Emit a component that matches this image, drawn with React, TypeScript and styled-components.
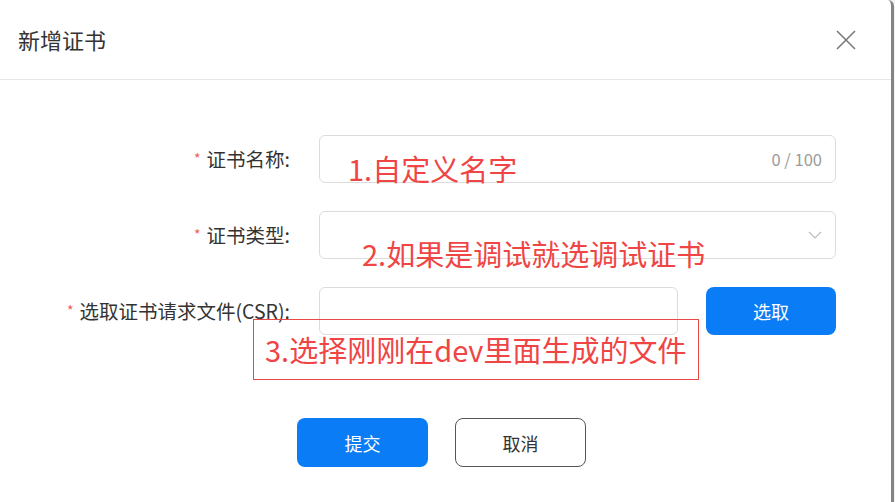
import React from "react";
import styled, { createGlobalStyle } from "styled-components";

const GlobalStyle = createGlobalStyle`
  html, body {
    margin: 0;
    padding: 0;
    background: #f3f3f3;
    font-family: "Noto Sans CJK SC", "Noto Sans", sans-serif;
  }
  * { box-sizing: border-box; }
`;

const Dialog = styled.div`
  position: relative;
  width: 894px;
  height: 502px;
  background: #ffffff;
  border-right: 3px solid #858585;
  border-top-right-radius: 6px;
  overflow: hidden;
`;

const Header = styled.div`
  height: 80px;
  display: flex;
  align-items: center;
  justify-content: space-between;
  padding: 0 34px 0 18px;
  border-bottom: 1px solid #e6e6e6;
`;

const Title = styled.div`
  font-size: 22px;
  color: #333333;
  line-height: 1;
  padding-bottom: 2px;
`;

const CloseButton = styled.button`
  width: 22px;
  height: 22px;
  padding: 0;
  border: none;
  background: none;
  display: flex;
  align-items: center;
  justify-content: center;
  cursor: pointer;
`;

const Form = styled.div`
  padding-top: 55px;
  display: flex;
  flex-direction: column;
  gap: 28px;
`;

const Row = styled.div`
  display: grid;
  grid-template-columns: 290px 517px;
  column-gap: 29px;
  align-items: center;
  height: 48px;
`;

const Label = styled.label`
  text-align: right;
  font-size: 19.5px;
  color: #333333;
  white-space: nowrap;
  line-height: 1;
`;

const Star = styled.span`
  color: #f05a5a;
  font-size: 14px;
  margin-right: 6px;
  vertical-align: 3px;
`;

const Field = styled.div`
  height: 48px;
  border: 1px solid #dcdcdc;
  border-radius: 6px;
  display: flex;
  align-items: center;
  justify-content: flex-end;
  padding-right: 13px;
  background: #fff;
`;

const Counter = styled.span`
  font-size: 16.5px;
  color: #9a9a9a;
  line-height: 1;
`;

const FileRow = styled.div`
  display: flex;
  gap: 28px;
  align-items: center;
`;

const FileField = styled(Field)`
  width: 359px;
`;

const Button = styled.button<{ $primary?: boolean; $w?: number; $h?: number }>`
  width: ${(p) => p.$w ?? 131}px;
  height: ${(p) => p.$h ?? 49}px;
  border-radius: 8px;
  font-family: inherit;
  font-size: 18px;
  line-height: 1;
  cursor: pointer;
  background: ${(p) => (p.$primary ? "#0a7cf6" : "#ffffff")};
  color: ${(p) => (p.$primary ? "#ffffff" : "#333333")};
  border: ${(p) => (p.$primary ? "none" : "1.5px solid #555555")};
`;

const Footer = styled.div`
  margin-top: 83px;
  padding-left: 297px;
  display: flex;
  gap: 27px;
`;

const Note = styled.div<{ $left: number; $top: number }>`
  position: absolute;
  left: ${(p) => p.$left}px;
  top: ${(p) => p.$top}px;
  font-size: 29px;
  line-height: 29px;
  color: #ef4545;
  white-space: nowrap;
`;

const NoteBox = styled(Note)`
  height: 61px;
  width: 446px;
  border: 1px solid #e84848;
  display: flex;
  align-items: center;
  padding-left: 11px;
`;

const Chevron = () => (
  <svg width="14" height="8" viewBox="0 0 14 8" fill="none">
    <path d="M1 1 L7 7 L13 1" stroke="#bdbdbd" strokeWidth="1.2" />
  </svg>
);

const CloseIcon = () => (
  <svg width="22" height="22" viewBox="0 0 22 22" fill="none">
    <path d="M2 2 L20 20 M20 2 L2 20" stroke="#7a7a7a" strokeWidth="1.6" />
  </svg>
);

export default function App() {
  return (
    <>
      <GlobalStyle />
      <Dialog>
        <Header>
          <Title>新增证书</Title>
          <CloseButton aria-label="close">
            <CloseIcon />
          </CloseButton>
        </Header>
        <Form>
          <Row>
            <Label>
              <Star>*</Star>证书名称:
            </Label>
            <Field>
              <Counter>0 / 100</Counter>
            </Field>
          </Row>
          <Row>
            <Label>
              <Star>*</Star>证书类型:
            </Label>
            <Field>
              <Chevron />
            </Field>
          </Row>
          <Row>
            <Label>
              <Star>*</Star>选取证书请求文件(CSR):
            </Label>
            <FileRow>
              <FileField />
              <Button $primary $w={130} $h={48}>
                选取
              </Button>
            </FileRow>
          </Row>
        </Form>
        <Footer>
          <Button $primary>提交</Button>
          <Button>取消</Button>
        </Footer>
        <Note $left={348} $top={154}>1.自定义名字</Note>
        <Note $left={362} $top={239}>2.如果是调试就选调试证书</Note>
        <NoteBox $left={253} $top={319}>3.选择刚刚在dev里面生成的文件</NoteBox>
      </Dialog>
    </>
  );
}
